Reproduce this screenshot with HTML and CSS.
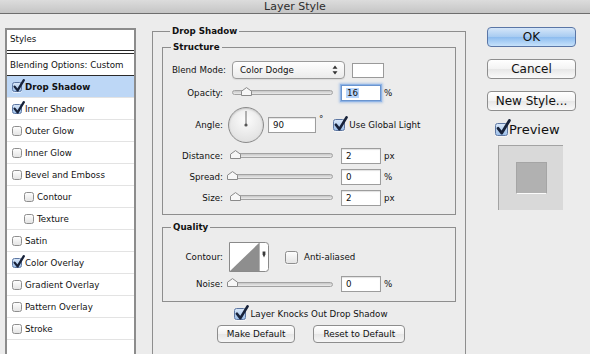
FILE: index.html
```html
<!DOCTYPE html>
<html lang="en">
<head>
    <meta charset="UTF-8">
    <title>Layer Style</title>
    <link rel="stylesheet" href="styles.css">
</head>
<body>
    <svg class="defs" width="0" height="0">
        <symbol id="tick" viewBox="0 0 12 13">
            <path d="M1.6 7.6 L4.6 11.4 L10.8 1.2" fill="none" stroke="#17223a" stroke-width="2.3" stroke-linecap="round" stroke-linejoin="round"/>
        </symbol>
        <symbol id="thumb" viewBox="0 0 11 9">
            <path d="M0.5 8.5 V4.2 L5.5 0.6 L10.5 4.2 V8.5 Z" fill="#f7f7f7" stroke="#8a8a8a"/>
        </symbol>
    </svg>

    <div class="titlebar"><span>Layer Style</span></div>

    <div class="window">
        <div class="styles-list">
            <div class="list-head">Styles</div>
            <div class="list-blend">Blending Options: Custom</div>
            <ul class="items">
                <li class="item selected"><span class="cb on"><svg class="tick"><use href="#tick"/></svg></span>Drop Shadow</li>
                <li class="item"><span class="cb on"><svg class="tick"><use href="#tick"/></svg></span>Inner Shadow</li>
                <li class="item"><span class="cb"></span>Outer Glow</li>
                <li class="item"><span class="cb"></span>Inner Glow</li>
                <li class="item"><span class="cb"></span>Bevel and Emboss</li>
                <li class="item sub"><span class="cb"></span>Contour</li>
                <li class="item sub"><span class="cb"></span>Texture</li>
                <li class="item"><span class="cb"></span>Satin</li>
                <li class="item"><span class="cb on"><svg class="tick"><use href="#tick"/></svg></span>Color Overlay</li>
                <li class="item"><span class="cb"></span>Gradient Overlay</li>
                <li class="item"><span class="cb"></span>Pattern Overlay</li>
                <li class="item"><span class="cb"></span>Stroke</li>
            </ul>
        </div>

        <div class="settings">
            <fieldset class="group outer">
                <legend>Drop Shadow</legend>

                <fieldset class="group structure">
                    <legend>Structure</legend>
                    <div class="row r-blend">
                        <span class="lbl wide">Blend Mode:</span>
                        <div class="select">Color Dodge
                            <svg width="6" height="10" viewBox="0 0 6 10"><path d="M3 0.5 L5.5 3.8 H0.5 Z M3 9.5 L5.5 6.2 H0.5 Z" fill="#333"/></svg>
                        </div>
                        <span class="swatch"></span>
                    </div>
                    <div class="row r-opacity">
                        <span class="lbl">Opacity:</span>
                        <div class="slider"><span class="track"></span><svg class="thumb" style="left: 9px"><use href="#thumb"/></svg></div>
                        <span class="field focus"><span class="sel">16</span></span>
                        <span class="unit">%</span>
                    </div>
                    <div class="row r-angle">
                        <span class="lbl">Angle:</span>
                        <div class="dial">
                            <svg width="34" height="34" viewBox="0 0 34 34"><line x1="17" y1="17" x2="17" y2="3" stroke="#6a6a6a" stroke-width="1"/><circle cx="17" cy="17" r="1.6" fill="#555"/></svg>
                        </div>
                        <span class="field wide-field">90</span>
                        <span class="deg">°</span>
                        <span class="cb mid on"><svg class="tick"><use href="#tick"/></svg></span>
                        <span class="check-text">Use Global Light</span>
                    </div>
                    <div class="row r-step">
                        <span class="lbl">Distance:</span>
                        <div class="slider"><span class="track"></span><svg class="thumb" style="left: -2px"><use href="#thumb"/></svg></div>
                        <span class="field">2</span>
                        <span class="unit">px</span>
                    </div>
                    <div class="row r-step">
                        <span class="lbl">Spread:</span>
                        <div class="slider"><span class="track"></span><svg class="thumb" style="left: -5px"><use href="#thumb"/></svg></div>
                        <span class="field">0</span>
                        <span class="unit">%</span>
                    </div>
                    <div class="row r-step">
                        <span class="lbl">Size:</span>
                        <div class="slider"><span class="track"></span><svg class="thumb" style="left: -2px"><use href="#thumb"/></svg></div>
                        <span class="field">2</span>
                        <span class="unit">px</span>
                    </div>
                </fieldset>

                <fieldset class="group quality">
                    <legend>Quality</legend>
                    <div class="row r-contour">
                        <span class="lbl">Contour:</span>
                        <svg class="contour" width="40" height="30" viewBox="0 0 40 30">
                            <path d="M0.5 0.5 H36.5 Q39.5 0.5 39.5 3.5 V26.5 Q39.5 29.5 36.5 29.5 H0.5 Z" fill="#fff" stroke="#8a8a8a"/>
                            <path d="M1 29 L30 1 V29 Z" fill="#8e8e8e"/>
                            <line x1="30.5" y1="1" x2="30.5" y2="29" stroke="#b5b5b5"/>
                            <path d="M33.6 9.5 H36.4 V12.5 L35 15.5 L33.6 12.5 Z" fill="#3a3a3a"/>
                        </svg>
                        <span class="cb big anti"></span>
                        <span class="check-text">Anti-aliased</span>
                    </div>
                    <div class="row r-noise">
                        <span class="lbl">Noise:</span>
                        <div class="slider"><span class="track"></span><svg class="thumb" style="left: -5px"><use href="#thumb"/></svg></div>
                        <span class="field">0</span>
                        <span class="unit">%</span>
                    </div>
                </fieldset>

                <div class="row r-knock">
                    <span class="cb mid on"><svg class="tick"><use href="#tick"/></svg></span>
                    <span class="check-text">Layer Knocks Out Drop Shadow</span>
                </div>
                <div class="row r-buttons">
                    <button class="small-btn">Make Default</button>
                    <button class="small-btn">Reset to Default</button>
                </div>
            </fieldset>
        </div>

        <div class="actions">
            <button class="btn default">OK</button>
            <button class="btn">Cancel</button>
            <button class="btn">New Style...</button>
            <div class="preview-check">
                <span class="cb big on"><svg class="tick"><use href="#tick"/></svg></span>
                <span>Preview</span>
            </div>
            <div class="preview">
                <div class="preview-swatch"></div>
            </div>
        </div>
    </div>
</body>
</html>
```

FILE: styles.css
```css
* {
    box-sizing: border-box;
}
body {
    margin: 0;
    width: 590px;
    height: 354px;
    overflow: hidden;
    background-color: #ececec;
    font-family: "DejaVu Sans", "Liberation Sans", sans-serif;
    font-size: 8.7px;
    color: #111;
}
.defs {
    position: absolute;
}

/* title bar */
.titlebar {
    height: 14px;
    background: linear-gradient(#dcdcdc, #c5c5c5);
    border-bottom: 1px solid #6e6e6e;
    text-align: center;
}
.titlebar span {
    display: block;
    font-size: 11px;
    line-height: 13px;
    color: #2d2d2d;
}

.window {
    display: flex;
    align-items: flex-start;
    height: 340px;
    overflow: hidden;
}

/* styles list on the left */
.styles-list {
    margin: 14px 0 0 5px;
    width: 131px;
    height: 326px;
    background: #fff;
    border: 2px solid #8c8c8c;
    border-bottom: 0;
}
.list-head {
    height: 24px;
    padding: 3px 0 0 3px;
    line-height: 12px;
    border-bottom: 4px double #262626;
}
.list-blend {
    height: 22px;
    display: flex;
    align-items: center;
    padding-left: 3px;
    border-bottom: 1px solid #2a2a2a;
}
.items {
    list-style: none;
    margin: 0;
    padding: 0;
}
.item {
    height: 22px;
    display: flex;
    align-items: center;
    padding-left: 5px;
    border-bottom: 1px solid #e3e3e3;
}
.item.sub {
    padding-left: 17px;
}
.item.selected {
    background: #bdd7f6;
    font-weight: bold;
}

/* checkboxes */
.cb {
    position: relative;
    flex: none;
    width: 10px;
    height: 10px;
    margin-right: 3px;
    border: 1px solid #8e8e8e;
    border-radius: 2.5px;
    background: linear-gradient(#fdfdfd, #e4e4e4);
    box-shadow: 0 1px 0 rgba(255,255,255,0.6);
}
.cb.on {
    border-color: #5d77a3;
    background: linear-gradient(#d7e6f8, #9dc0ea);
}
.cb.mid {
    width: 12px;
    height: 12px;
}
.cb.big {
    width: 13px;
    height: 13px;
}
.tick {
    position: absolute;
    left: 0;
    top: -4px;
    width: 12px;
    height: 13px;
    overflow: visible;
}
.cb.mid .tick {
    left: 0;
    top: -4px;
    width: 14px;
    height: 15px;
}
.cb.big .tick {
    left: 0;
    top: -5px;
    width: 15px;
    height: 16px;
}

/* middle settings */
.settings {
    margin-left: 16px;
    width: 314px;
}
.group {
    margin: 0;
    padding: 0 9px;
    border: 1px solid #8e8e8e;
    min-width: 0;
}
.group legend {
    margin-left: 8px;
    padding: 0 2px;
    font-weight: bold;
    line-height: 12px;
}
.outer {
    margin-top: 11px;
    padding-bottom: 14px;
}
.structure {
    margin-top: 4px;
    padding: 0 0 8px;
}
.quality {
    margin-top: 6px;
    padding: 0 0 9px;
}

.row {
    display: flex;
    align-items: center;
}
.lbl {
    flex: none;
    width: 60px;
    text-align: right;
}
.lbl.wide {
    width: 63px;
}
.r-blend {
    height: 18px;
    margin-top: 8px;
}
.r-opacity {
    height: 17px;
    margin-top: 5px;
}
.r-angle {
    height: 36px;
    margin-top: 6px;
}
.r-step {
    height: 17px;
    margin-top: 4px;
}
.r-contour {
    height: 30px;
    margin-top: 9px;
}
.r-noise {
    height: 16px;
    margin-top: 4px;
}
.r-knock {
    height: 14px;
    margin-top: 5px;
    justify-content: center;
    padding-left: 4px;
}
.r-buttons {
    height: 18px;
    margin-top: 4px;
    justify-content: center;
    gap: 18px;
    padding-left: 4px;
}

.select {
    display: flex;
    align-items: center;
    justify-content: space-between;
    width: 113px;
    height: 18px;
    margin-left: 6px;
    padding: 0 6px 0 7px;
    border: 1px solid #9b9b9b;
    border-radius: 4px;
    background: linear-gradient(#fefefe, #ebebeb);
    box-shadow: 0 1px 1px rgba(0,0,0,0.08);
}
.swatch {
    width: 32px;
    height: 15px;
    margin-left: 7px;
    background: #fff;
    border: 1px solid #9a9a9a;
}

.slider {
    position: relative;
    display: flex;
    align-items: center;
    width: 101px;
    height: 17px;
    margin-left: 9px;
    flex: none;
}
.track {
    width: 100%;
    height: 5px;
    border: 1px solid #a2a2a2;
    border-radius: 3px;
    background: linear-gradient(#c7c7c7, #ebebeb);
}
.thumb {
    position: absolute;
    top: 3px;
    width: 11px;
    height: 9px;
}
.r-noise .thumb {
    top: 2px;
}

.field {
    flex: none;
    width: 40px;
    height: 16px;
    margin-left: 8px;
    padding-left: 4px;
    line-height: 14px;
    background: #fff;
    border: 1px solid #9d9d9d;
    box-shadow: inset 0 1px 1px rgba(0,0,0,0.12);
}
.field.focus {
    border-color: #6b95cf;
    box-shadow: 0 0 0 1px #8fb4e6, 0 0 2px 2px rgba(120,165,225,0.5);
}
.sel {
    background: #b6d4fb;
    padding: 0 1px;
}
.field.wide-field {
    width: 48px;
    margin-left: 4px;
}
.unit {
    margin-left: 3px;
}

.dial {
    flex: none;
    width: 36px;
    height: 36px;
    margin-left: 5px;
    border: 1px solid #8b8b8b;
    border-radius: 50%;
    background: radial-gradient(circle at 50% 35%, #fcfcfc, #dadada);
    box-shadow: inset 0 1px 2px rgba(0,0,0,0.18);
}
.dial svg {
    display: block;
}
.deg {
    align-self: flex-start;
    margin: 7px 10px 0 3px;
}
.check-text {
    margin-left: 1px;
}

.contour {
    flex: none;
    margin-left: 6px;
    display: block;
}
.anti {
    margin-left: 16px;
    margin-right: 5px;
}

.small-btn {
    height: 18px;
    padding: 0 9px;
    font-family: inherit;
    font-size: 8.9px;
    color: #111;
    border: 1px solid #8d8d8d;
    border-radius: 4px;
    background: linear-gradient(#ffffff, #f1f1f1 50%, #e6e6e6 51%, #f6f6f6);
}

/* right column */
.actions {
    margin: 13px 0 0 21px;
    width: 89px;
    display: flex;
    flex-direction: column;
}
.btn {
    height: 20px;
    margin-bottom: 12px;
    font-family: inherit;
    font-size: 12px;
    color: #111;
    border: 1px solid #8e8e8e;
    border-radius: 4px;
    background: linear-gradient(#ffffff, #f3f3f3 50%, #e7e7e7 51%, #fafafa);
}
.btn.default {
    border-color: #5a76a6;
    background: linear-gradient(#d5e6f9, #a7cbf1 50%, #8dbcef 51%, #c6e2fb);
}
.preview-check {
    display: flex;
    align-items: center;
    height: 14px;
    margin: -1px 0 0 8px;
    font-size: 13px;
}
.preview-check .cb {
    margin-right: 1px;
}
.preview {
    display: flex;
    align-items: center;
    justify-content: center;
    width: 65px;
    height: 65px;
    margin: 9px 0 0 11px;
    background: #d9d9d9;
    border-top: 1px solid #a3a3a3;
    border-left: 1px solid #a3a3a3;
}
.preview-swatch {
    width: 31px;
    height: 32px;
    background: #b1b1b1;
    border: 1px solid #a5a5a5;
    border-bottom: 1px solid #fbfbfb;
}
```
